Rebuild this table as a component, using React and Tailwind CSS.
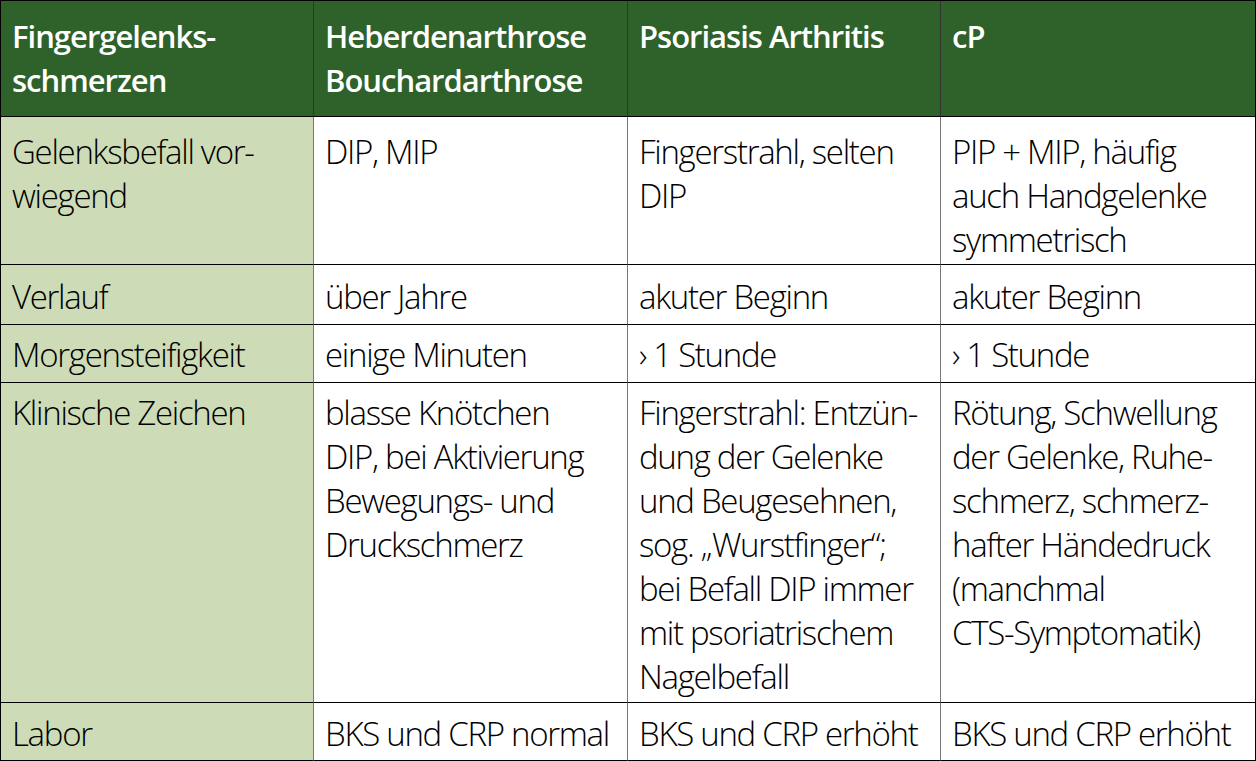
const rows = [
  {
    label: "Gelenksbefall vor-\nwiegend",
    cells: ["DIP, MIP", "Fingerstrahl, selten\nDIP", "PIP + MIP, häufig\nauch Handgelenke\nsymmetrisch"],
    pad: "pt-[13px] pb-[2px]",
  },
  {
    label: "Verlauf",
    cells: ["über Jahre", "akuter Beginn", "akuter Beginn"],
    pad: "pt-[10px] pb-[5px]",
  },
  {
    label: "Morgensteifigkeit",
    cells: ["einige Minuten", "› 1 Stunde", "› 1 Stunde"],
    pad: "pt-[8px] pb-[5px]",
  },
  {
    label: "Klinische Zeichen",
    cells: [
      "blasse Knötchen\nDIP, bei Aktivierung\nBewegungs- und\nDruckschmerz",
      "Fingerstrahl: Entzün-\ndung der Gelenke\nund Beugesehnen,\nsog. „Wurstfinger“;\nbei Befall DIP immer\nmit psoriatrischem\nNagelbefall",
      "Rötung, Schwellung\nder Gelenke, Ruhe-\nschmerz, schmerz-\nhafter Händedruck\n(manchmal\nCTS-Symptomatik)",
    ],
    pad: "pt-[8px] pb-[3px]",
  },
  {
    label: "Labor",
    cells: ["BKS und CRP normal", "BKS und CRP erhöht", "BKS und CRP erhöht"],
    pad: "pt-[9px] pb-[4px]",
  },
];

const headers = ["Fingergelenks-\nschmerzen", "Heberdenarthrose\nBouchardarthrose", "Psoriasis Arthritis", "cP"];

export default function App() {
  return (
    <div className="w-[1256px] h-[761px] bg-white font-['Open_Sans','Liberation_Sans',sans-serif] text-black">
      <table className="w-[1255px] table-fixed border-separate border-spacing-0 border-t border-l border-black">
        <colgroup>
          <col className="w-[313px]" />
          <col className="w-[314px]" />
          <col className="w-[313px]" />
          <col className="w-[315px]" />
        </colgroup>
        <thead>
          <tr className="bg-[#2f612b]">
            {headers.map((h, i) => (
              <th
                key={i}
                className={`text-left align-top whitespace-pre-line font-semibold tracking-[-1px] text-white text-[31px] leading-[44px] pl-[11px] pt-[13px] pb-[14px] border-b border-black ${i === 3 ? "border-r border-r-black" : "border-r border-r-[#333]"}`}
              >
                {h}
              </th>
            ))}
          </tr>
        </thead>
        <tbody>
          {rows.map((r, i) => (
            <tr key={i}>
              <td className={`align-top whitespace-pre-line bg-[#cddcb6] font-light tracking-[-1.3px] text-[33px] leading-[44px] pl-[11px] border-b border-r border-b-black border-r-[#777] ${r.pad}`}>
                {r.label}
              </td>
              {r.cells.map((c, j) => (
                <td
                  key={j}
                  className={`align-top whitespace-pre-line font-light tracking-[-1.3px] text-[33px] leading-[44px] pl-[11px] border-b border-r border-b-black ${j === 2 ? "border-r-black" : "border-r-[#777]"} ${r.pad}`}
                >
                  {c}
                </td>
              ))}
            </tr>
          ))}
        </tbody>
      </table>
    </div>
  );
}
